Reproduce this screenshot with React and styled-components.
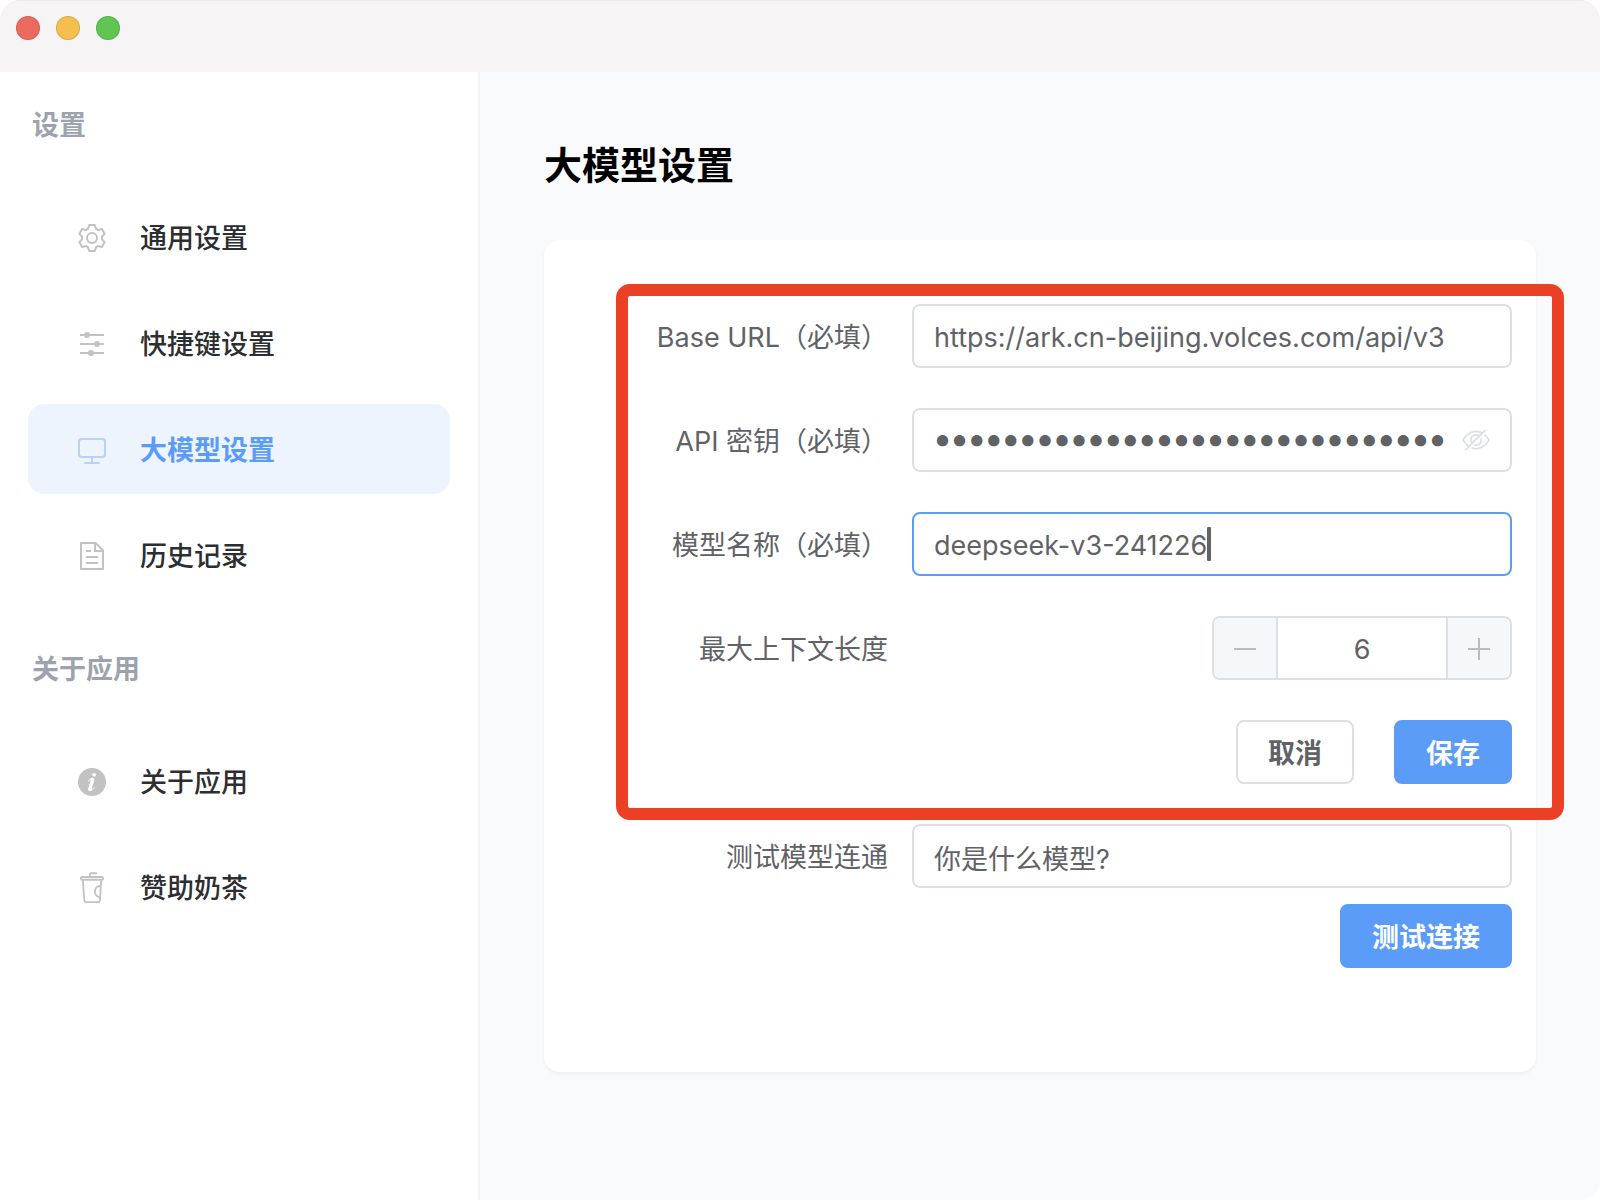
import React, { useState } from "react";
import styled, { createGlobalStyle, css } from "styled-components";

const color = {
  text: "#606266",
  ink: "#2c2e31",
  muted: "#9ca3af",
  icon: "#c2c2c2",
  border: "#dcdfe6",
  primary: "#5a9cf8",
  primarySoft: "#edf4fe",
  page: "#f9fafc",
};

const GlobalStyle = createGlobalStyle`
  *, *::before, *::after { box-sizing: border-box; }
  body {
    margin: 0;
    background: #fff;
    color: ${color.text};
    font-family: Inter, "Noto Sans CJK SC", sans-serif;
    font-size: 27px;
    line-height: 40px;
  }
  button, input { font: inherit; color: inherit; }
`;

const Window = styled.div`
  display: flex;
  flex-direction: column;
  min-height: 100vh;
  overflow: hidden;
  border-radius: 20px;
`;

const TitleBar = styled.header`
  display: flex;
  align-items: flex-start;
  gap: 16px;
  height: 72px;
  padding: 16px;
  background: #f6f4f5;
  box-shadow: inset 0 1px 0 #ececec;
`;

const Light = styled.button`
  width: 24px;
  height: 24px;
  padding: 0;
  border: 1px solid rgba(0, 0, 0, 0.12);
  border-radius: 50%;
  background: ${(p) => p.$fill};
`;

const Body = styled.div`
  display: flex;
  flex: 1;
`;

const Sidebar = styled.nav`
  display: flex;
  flex-direction: column;
  flex: 0 0 480px;
  gap: 48px;
  padding: 32px 28px;
  border-right: 2px solid #f3f4f6;
  background: #fff;
`;

const SectionTitle = styled.h2`
  margin: 0 0 46px;
  padding: 2px 0 0 4px;
  color: ${color.muted};
  font-size: 27px;
  line-height: 40px;
  font-weight: 700;
`;

const NavList = styled.ul`
  display: flex;
  flex-direction: column;
  gap: 16px;
  margin: 0;
  padding: 0;
  list-style: none;
`;

const NavLink = styled.a`
  display: flex;
  align-items: center;
  gap: 32px;
  height: 90px;
  padding: 2px 48px 0;
  border-radius: 16px;
  color: ${color.ink};
  font-weight: 500;
  text-decoration: none;

  svg { color: ${color.icon}; }

  ${(p) =>
    p.$active &&
    css`
      background: ${color.primarySoft};
      color: ${color.primary};
      font-weight: 700;
      svg { color: #b9d1fb; }
    `}
`;

const NavText = styled.span`
  padding-top: 2px;
`;

const Main = styled.main`
  flex: 1;
  min-width: 0;
  padding: 64px;
  background: ${color.page};
`;

const PageTitle = styled.h1`
  margin: 0 0 46px;
  color: #000;
  font-size: 38px;
  line-height: 58px;
  font-weight: 700;
`;

const Card = styled.form`
  display: flex;
  flex-direction: column;
  gap: 40px;
  padding: 64px 24px 104px;
  border-radius: 16px;
  background: #fff;
  box-shadow: 0 2px 4px rgba(0, 0, 0, 0.05);
`;

const RequiredGroup = styled.div`
  position: relative;
  display: flex;
  flex-direction: column;
  gap: 40px;
`;

const Highlight = styled.div`
  position: absolute;
  inset: -20px -52px -36px 48px;
  border: 12px solid #e94026;
  border-radius: 14px;
  pointer-events: none;
`;

const Row = styled.div`
  display: flex;
  align-items: center;
  gap: 24px;
`;

const Label = styled.label`
  flex: 0 0 320px;
  padding-top: 4px;
  text-align: right;
`;

const FieldSlot = styled.div`
  display: flex;
  flex: 1;
  justify-content: flex-end;
  min-width: 0;
`;

const InputBox = styled.div`
  display: flex;
  align-items: center;
  flex: 1;
  min-width: 0;
  height: 64px;
  padding: 0 20px;
  border: 2px solid ${(p) => (p.$focused ? color.primary : color.border)};
  border-radius: 8px;
  background: #fff;
`;

const TextInput = styled.input`
  flex: ${(p) => (p.$fit ? "none" : "1")};
  field-sizing: ${(p) => (p.$fit ? "content" : "fixed")};
  min-width: 0;
  height: 44px;
  padding: 2px 0 0;
  border: 0;
  outline: 0;
  background: transparent;
`;

const PasswordInput = styled(TextInput)`
  padding: 0 0 4px;
  font-size: 36px;
  font-weight: 700;
`;

const Caret = styled.span`
  width: 4px;
  height: 34px;
  border-radius: 1px;
  background: ${color.text};
`;

const EyeButton = styled.button`
  display: flex;
  margin-left: 16px;
  padding: 0;
  border: 0;
  background: none;
  color: ${color.border};
`;

const Stepper = styled.div`
  display: flex;
  width: 300px;
  height: 64px;
  overflow: hidden;
  border: 2px solid ${color.border};
  border-radius: 8px;
`;

const StepButton = styled.button`
  display: flex;
  align-items: center;
  justify-content: center;
  flex: 0 0 62px;
  padding: 2px 0 0;
  border: 0;
  background: #f5f7fa;
  color: #b9bbbf;
`;

const StepInput = styled.input`
  flex: 1;
  min-width: 0;
  padding: 4px 0 0;
  border: solid ${color.border};
  border-width: 0 2px;
  outline: 0;
  background: #fff;
  text-align: center;
`;

const Actions = styled.div`
  display: flex;
  justify-content: flex-end;
  gap: 40px;
`;

const TestBlock = styled.div`
  display: flex;
  flex-direction: column;
  gap: 16px;
`;

const Button = styled.button`
  height: 64px;
  padding: 4px 30px 0;
  border: 2px solid ${(p) => (p.$primary ? color.primary : color.border)};
  border-radius: 8px;
  background: ${(p) => (p.$primary ? color.primary : "#fff")};
  color: ${(p) => (p.$primary ? "#fff" : color.text)};
  font-weight: 700;
`;

const Glyph = ({ size = 32, children }) => (
  <svg width={size} height={size} viewBox="0 0 1024 1024" fill="currentColor" aria-hidden="true">
    {children}
  </svg>
);

const GearIcon = () => (
  <Glyph>
    <path d="M600.704 64a32 32 0 0 1 30.464 22.208l35.2 109.376c14.784 7.232 28.928 15.36 42.432 24.512l112.384-24.192a32 32 0 0 1 34.432 15.36L944.32 364.8a32 32 0 0 1-4.032 37.504l-77.12 85.12a357.12 357.12 0 0 1 0 49.024l77.12 85.248a32 32 0 0 1 4.032 37.504l-88.704 153.6a32 32 0 0 1-34.432 15.296L708.8 803.904c-13.44 9.088-27.648 17.28-42.368 24.512l-35.264 109.376A32 32 0 0 1 600.704 960H423.296a32 32 0 0 1-30.464-22.208L357.696 828.48a351.616 351.616 0 0 1-42.56-24.64l-112.32 24.256a32 32 0 0 1-34.432-15.36L79.68 659.2a32 32 0 0 1 4.032-37.504l77.12-85.248a357.12 357.12 0 0 1 0-48.896l-77.12-85.248A32 32 0 0 1 79.68 364.8l88.704-153.6a32 32 0 0 1 34.432-15.296l112.32 24.256c13.568-9.152 27.776-17.408 42.56-24.64l35.2-109.312A32 32 0 0 1 423.232 64H600.64zm-23.424 64H446.72l-36.352 113.088-24.512 11.968a294.113 294.113 0 0 0-34.816 20.096l-22.656 15.36-116.224-25.088-65.28 113.152 79.68 88.192-1.92 27.136a293.12 293.12 0 0 0 0 40.192l1.92 27.136-79.808 88.192 65.344 113.152 116.224-25.024 22.656 15.296a294.113 294.113 0 0 0 34.816 20.096l24.512 11.968L446.72 896h130.688l36.48-113.152 24.448-11.904a288.282 288.282 0 0 0 34.752-20.096l22.592-15.296 116.288 25.024 65.28-113.152-79.744-88.192 1.92-27.136a293.12 293.12 0 0 0 0-40.256l-1.92-27.136 79.808-88.128-65.344-113.152-116.288 24.96-22.592-15.232a287.616 287.616 0 0 0-34.752-20.096l-24.448-11.904L577.344 128zM512 320a192 192 0 1 1 0 384 192 192 0 0 1 0-384m0 64a128 128 0 1 0 0 256 128 128 0 0 0 0-256" />
  </Glyph>
);

const SlidersIcon = () => (
  <Glyph>
    <path d="M128 192h768v60H128zM128 482h768v60H128zM128 770h768v60H128z" />
    <circle cx="352" cy="222" r="98" />
    <circle cx="672" cy="512" r="98" />
    <circle cx="480" cy="800" r="98" />
  </Glyph>
);

const MonitorIcon = () => (
  <Glyph>
    <path d="M544 768v128h192a32 32 0 1 1 0 64H288a32 32 0 1 1 0-64h192V768H192A128 128 0 0 1 64 640V256a128 128 0 0 1 128-128h640a128 128 0 0 1 128 128v384a128 128 0 0 1-128 128zM192 192a64 64 0 0 0-64 64v384a64 64 0 0 0 64 64h640a64 64 0 0 0 64-64V256a64 64 0 0 0-64-64z" />
  </Glyph>
);

const DocumentIcon = () => (
  <Glyph>
    <path d="M832 384H576V128H192v768h640zm-26.496-64L640 154.496V320zM160 64h480l256 256v608a32 32 0 0 1-32 32H160a32 32 0 0 1-32-32V96a32 32 0 0 1 32-32m160 448h384v64H320zm0-192h160v64H320zm0 384h384v64H320z" />
  </Glyph>
);

const InfoIcon = () => (
  <Glyph>
    <path d="M512 64a448 448 0 1 1 0 896.064A448 448 0 0 1 512 64m67.2 275.072c33.28 0 60.288-23.104 60.288-57.344s-27.072-57.344-60.288-57.344c-33.28 0-60.16 23.104-60.16 57.344s26.88 57.344 60.16 57.344M590.912 699.2c0-6.848 2.368-24.64 1.024-34.752l-52.608 60.544c-10.88 11.456-24.512 19.392-30.912 17.28a12.992 12.992 0 0 1-8.256-14.72l87.68-276.992c7.168-35.136-12.544-67.2-54.336-71.296-44.096 0-108.992 44.736-148.48 101.504 0 6.784-1.28 23.68.064 33.792l52.544-60.608c10.88-11.328 23.552-19.328 29.952-17.152a12.8 12.8 0 0 1 7.808 16.128L388.48 728.576c-10.048 32.256 8.96 63.872 55.04 71.04 67.84 0 107.904-43.648 147.456-100.416z" />
  </Glyph>
);

const CupIcon = () => (
  <Glyph>
    <g fill="none" stroke="currentColor" strokeWidth="58" strokeLinecap="round" strokeLinejoin="round">
      <rect x="154" y="160" width="716" height="88" rx="44" />
      <path d="M440 150V90q0-50 50-50h160" />
      <path d="M218 262l48 644q4 56 56 56h390q50 0 54-56l40-644" />
      <path d="M786 452c-100-20-180 70-180 170s80 200 170 180" />
    </g>
  </Glyph>
);

const HideIcon = () => (
  <Glyph size={28}>
    <path d="M876.8 156.8c0-9.6-3.2-16-9.6-22.4-6.4-6.4-12.8-9.6-22.4-9.6-9.6 0-16 3.2-22.4 9.6L736 220.8c-64-32-137.6-51.2-224-60.8-160 16-288 73.6-377.6 176C44.8 438.4 0 496 0 512s48 73.6 134.4 176c22.4 25.6 44.8 48 73.6 67.2l-86.4 89.6c-6.4 6.4-9.6 12.8-9.6 22.4 0 9.6 3.2 16 9.6 22.4 6.4 6.4 12.8 9.6 22.4 9.6 9.6 0 16-3.2 22.4-9.6l704-710.4c3.2-6.4 6.4-12.8 6.4-22.4Zm-646.4 528c-76.8-70.4-128-128-153.6-172.8 28.8-48 80-105.6 153.6-172.8C304 272 400 230.4 512 224c64 3.2 124.8 19.2 176 44.8l-54.4 54.4C598.4 300.8 560 288 512 288c-64 0-115.2 22.4-160 64s-64 96-64 160c0 48 12.8 89.6 35.2 124.8L256 707.2c-9.6-6.4-19.2-16-25.6-22.4Zm140.8-96c-12.8-22.4-19.2-48-19.2-76.8 0-44.8 16-83.2 48-112 32-28.8 67.2-48 112-48 28.8 0 54.4 6.4 73.6 19.2zM889.599 336c-12.8-16-28.8-28.8-41.6-41.6l-48 48c73.6 67.2 124.8 124.8 150.4 169.6-28.8 48-80 105.6-153.6 172.8-73.6 67.2-172.8 108.8-284.8 115.2-51.2-3.2-99.2-12.8-140.8-28.8l-48 48c57.6 22.4 118.4 38.4 188.8 44.8 160-16 288-73.6 377.6-176C979.199 585.6 1024 528 1024 512s-48.001-73.6-134.401-176Z" />
    <path d="M511.998 672c-12.8 0-25.6-3.2-38.4-6.4l-51.2 51.2c28.8 12.8 57.6 19.2 89.6 19.2 64 0 115.2-22.4 160-64 41.6-41.6 64-96 64-160 0-32-6.4-64-19.2-89.6l-51.2 51.2c3.2 12.8 6.4 25.6 6.4 38.4 0 44.8-16 83.2-48 112-32 28.8-67.2 48-112 48Z" />
  </Glyph>
);

const StepIcon = ({ plus }) => (
  <svg width="22" height="22" viewBox="0 0 22 22" fill="none" stroke="currentColor" strokeWidth="2" aria-hidden="true">
    <path d={plus ? "M0 11h22M11 0v22" : "M0 11h22"} />
  </svg>
);

const sections = [
  {
    title: "设置",
    items: [
      { label: "通用设置", Icon: GearIcon },
      { label: "快捷键设置", Icon: SlidersIcon },
      { label: "大模型设置", Icon: MonitorIcon, active: true },
      { label: "历史记录", Icon: DocumentIcon },
    ],
  },
  {
    title: "关于应用",
    items: [
      { label: "关于应用", Icon: InfoIcon },
      { label: "赞助奶茶", Icon: CupIcon },
    ],
  },
];

const FormRow = ({ id, label, children }) => (
  <Row>
    <Label htmlFor={id}>{label}</Label>
    <FieldSlot>{children}</FieldSlot>
  </Row>
);

export default function App() {
  const [baseUrl, setBaseUrl] = useState("https://ark.cn-beijing.volces.com/api/v3");
  const [apiKey, setApiKey] = useState("0000000000000000000000000000000000000000");
  const [model, setModel] = useState("deepseek-v3-241226");
  const [context, setContext] = useState(6);
  const [prompt, setPrompt] = useState("你是什么模型?");

  return (
    <>
      <GlobalStyle />
      <Window>
        <TitleBar>
          <Light type="button" aria-label="关闭" $fill="#ed6a5e" />
          <Light type="button" aria-label="最小化" $fill="#f5bf4f" />
          <Light type="button" aria-label="缩放" $fill="#61c554" />
        </TitleBar>
        <Body>
          <Sidebar>
            {sections.map((section) => (
              <section key={section.title}>
                <SectionTitle>{section.title}</SectionTitle>
                <NavList>
                  {section.items.map(({ label, Icon, active }) => (
                    <li key={label}>
                      <NavLink href="#" $active={active} aria-current={active ? "page" : undefined}>
                        <Icon />
                        <NavText>{label}</NavText>
                      </NavLink>
                    </li>
                  ))}
                </NavList>
              </section>
            ))}
          </Sidebar>
          <Main>
            <PageTitle>大模型设置</PageTitle>
            <Card onSubmit={(e) => e.preventDefault()}>
              <RequiredGroup>
                <FormRow id="base-url" label="Base URL（必填）">
                  <InputBox>
                    <TextInput id="base-url" value={baseUrl} onChange={(e) => setBaseUrl(e.target.value)} />
                  </InputBox>
                </FormRow>
                <FormRow id="api-key" label="API 密钥（必填）">
                  <InputBox>
                    <PasswordInput id="api-key" type="password" value={apiKey} onChange={(e) => setApiKey(e.target.value)} />
                    <EyeButton type="button" aria-label="显示密钥">
                      <HideIcon />
                    </EyeButton>
                  </InputBox>
                </FormRow>
                <FormRow id="model" label="模型名称（必填）">
                  <InputBox $focused>
                    <TextInput id="model" $fit value={model} onChange={(e) => setModel(e.target.value)} />
                    <Caret />
                  </InputBox>
                </FormRow>
                <FormRow id="context" label="最大上下文长度">
                  <Stepper>
                    <StepButton type="button" aria-label="减少" onClick={() => setContext(context - 1)}>
                      <StepIcon />
                    </StepButton>
                    <StepInput id="context" inputMode="numeric" value={context} onChange={(e) => setContext(Number(e.target.value) || 0)} />
                    <StepButton type="button" aria-label="增加" onClick={() => setContext(context + 1)}>
                      <StepIcon plus />
                    </StepButton>
                  </Stepper>
                </FormRow>
                <Actions>
                  <Button type="button">取消</Button>
                  <Button type="submit" $primary>保存</Button>
                </Actions>
                <Highlight />
              </RequiredGroup>
              <TestBlock>
                <FormRow id="prompt" label="测试模型连通">
                  <InputBox>
                    <TextInput id="prompt" value={prompt} onChange={(e) => setPrompt(e.target.value)} />
                  </InputBox>
                </FormRow>
                <Actions>
                  <Button type="button" $primary>测试连接</Button>
                </Actions>
              </TestBlock>
            </Card>
          </Main>
        </Body>
      </Window>
    </>
  );
}
